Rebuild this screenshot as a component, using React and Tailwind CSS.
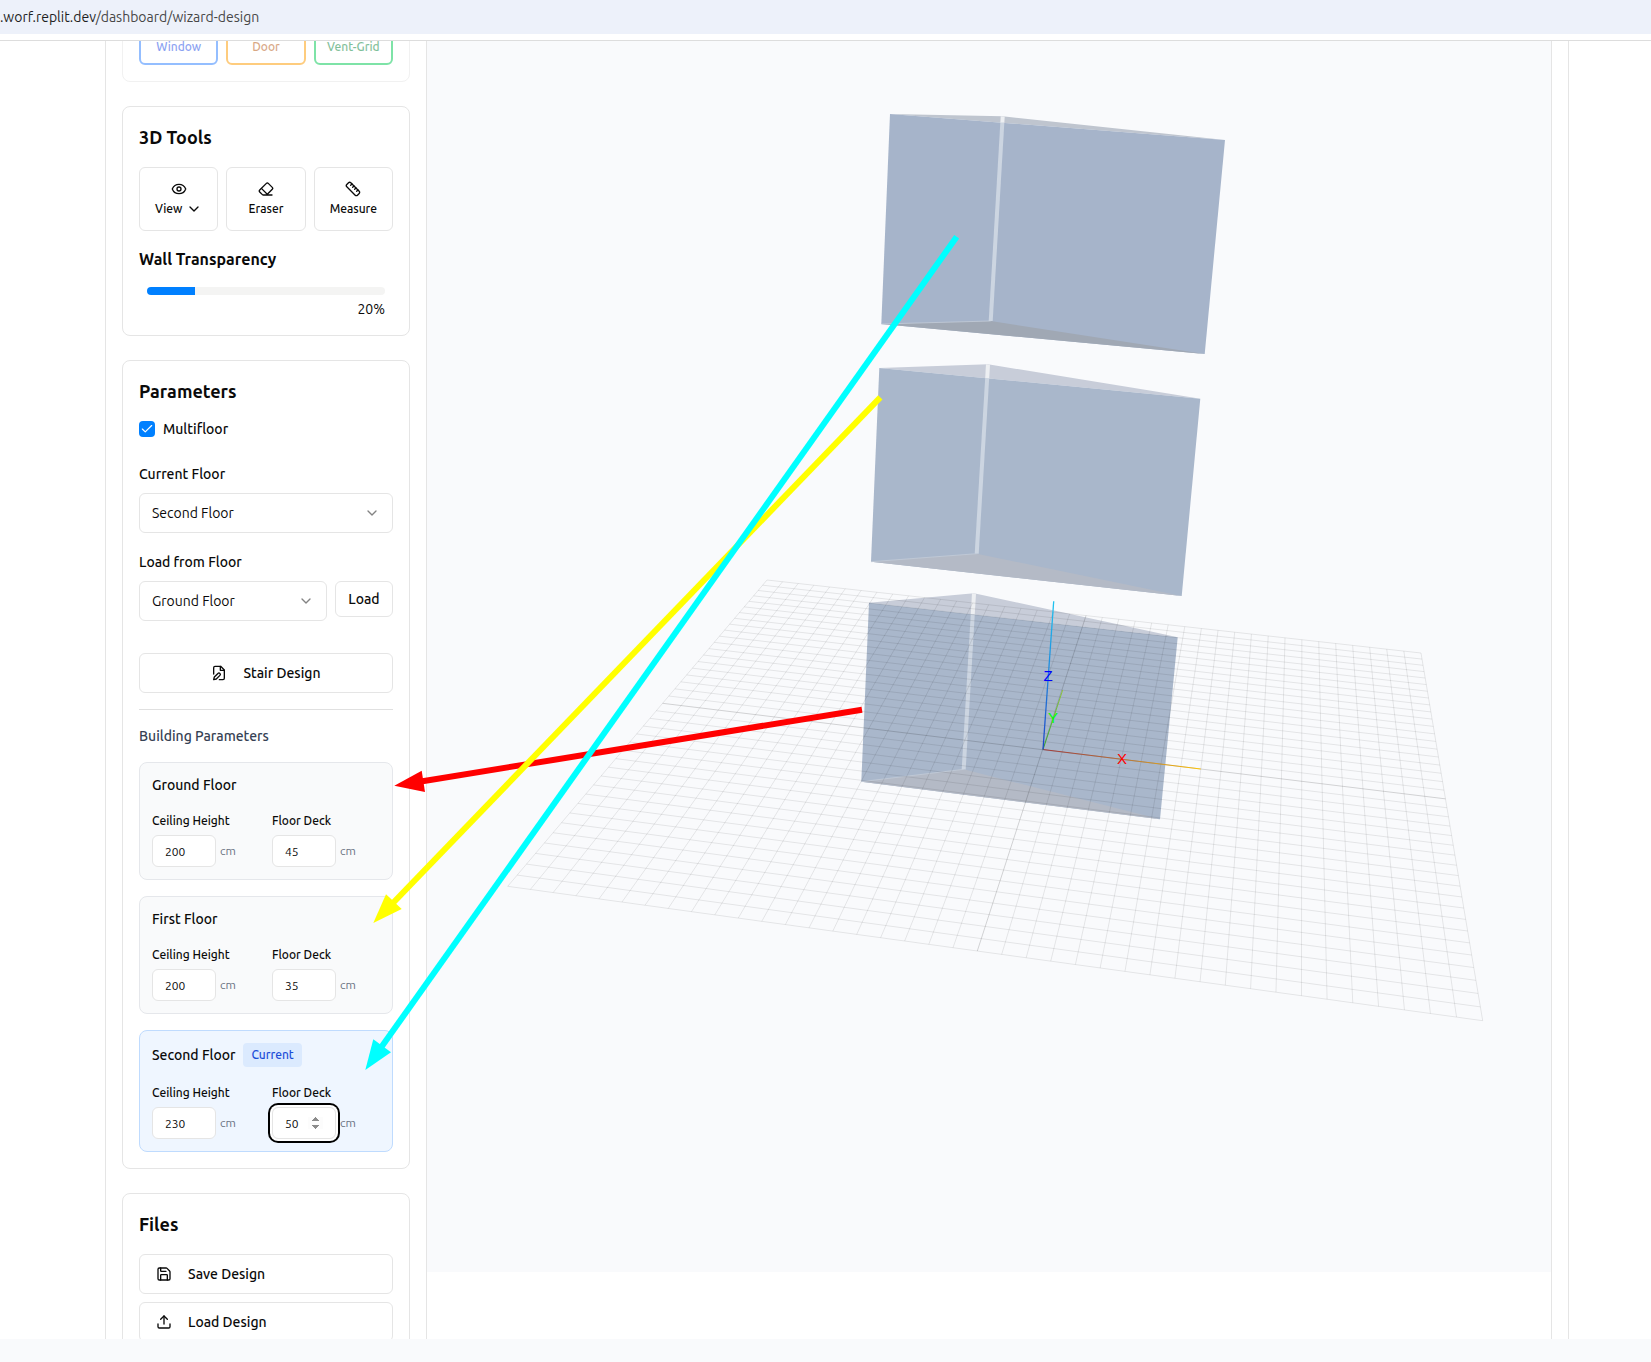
import { ChevronDown, Eraser, Eye, Ruler, Save, Upload, Check } from "lucide-react";

const CARD = "rounded-lg border border-[#e5e5e5] bg-white p-4";
const BUTTON = "rounded-md border border-[#e5e5e5] bg-white font-medium";

/* ---------- sidebar ---------- */

function PlaceCard() {
  return (
    <section className={`${CARD} -mt-[49px] opacity-50`}>
      <div className="grid grid-cols-3 gap-2 text-xs font-medium">
        <button className="flex h-14 items-end justify-center rounded-md border-2 border-blue-500 pb-2 text-blue-700">Window</button>
        <button className="flex h-14 items-end justify-center rounded-md border-2 border-amber-500 pb-2 text-[#b45309]">Door</button>
        <button className="flex h-14 items-end justify-center rounded-md border-2 border-green-500 pb-2 text-green-700">Vent-Grid</button>
      </div>
    </section>
  );
}

function ToolButton({ icon: Icon, children }) {
  return (
    <button className={`${BUTTON} flex h-16 flex-col items-center justify-center gap-1 text-xs`}>
      <Icon size={16} />
      <span className="flex items-center gap-1">{children}</span>
    </button>
  );
}

function ToolsCard() {
  const value = 20;
  return (
    <section className={CARD}>
      <h2 className="text-lg leading-7 font-semibold">3D Tools</h2>
      <div className="mt-4 grid grid-cols-3 gap-2">
        <ToolButton icon={Eye}>
          View <ChevronDown size={16} />
        </ToolButton>
        <ToolButton icon={Eraser}>Eraser</ToolButton>
        <ToolButton icon={Ruler}>Measure</ToolButton>
      </div>
      <label htmlFor="transparency" className="mt-4 block text-base leading-6 font-semibold">
        Wall Transparency
      </label>
      <div className="mt-4 px-2">
        <input
          id="transparency"
          type="range"
          min="0"
          max="100"
          defaultValue={value}
          className="block h-2 w-full appearance-none overflow-hidden rounded-full [&::-webkit-slider-thumb]:size-0 [&::-webkit-slider-thumb]:appearance-none"
          style={{ background: `linear-gradient(to right, #0080ff ${value}%, #f4f4f3 ${value}%)` }}
        />
        <output htmlFor="transparency" className="mt-1 block text-right text-sm">
          {value}%
        </output>
      </div>
    </section>
  );
}

function FloorSelect({ id, value }) {
  return (
    <div className="relative min-w-0 flex-1">
      <select
        id={id}
        defaultValue={value}
        className="block h-10 w-full appearance-none rounded-md border border-[#e5e5e5] bg-white px-3 text-sm"
      >
        <option>Ground Floor</option>
        <option>First Floor</option>
        <option>Second Floor</option>
      </select>
      <ChevronDown size={16} className="pointer-events-none absolute top-3 right-[13px] opacity-50" />
    </div>
  );
}

function FilePenIcon() {
  return (
    <svg width="16" height="16" viewBox="0 0 24 24" fill="none" stroke="currentColor" strokeWidth="2" strokeLinecap="round" strokeLinejoin="round">
      <path d="M4 13.5V4a2 2 0 0 1 2-2h8.5L20 7.5V20a2 2 0 0 1-2 2h-5.5" />
      <path d="M14 2v6h6" />
      <path d="M10.42 12.61a2.1 2.1 0 1 1 2.97 2.97L7.95 21 4 22l.99-3.95 5.43-5.44Z" />
    </svg>
  );
}

function Measure({ id, label, value, focused }) {
  return (
    <div>
      <label htmlFor={id} className="flex h-7 items-center text-xs font-medium">
        {label}
      </label>
      <div className="flex items-center gap-1">
        <input
          id={id}
          type="number"
          defaultValue={value}
          className={`h-8 w-16 rounded-md border border-[#e5e5e5] bg-white px-3 text-xs ${
            focused
              ? "ring-2 ring-black ring-offset-2 [&::-webkit-inner-spin-button]:opacity-100"
              : "[&::-webkit-inner-spin-button]:opacity-0"
          }`}
        />
        <span className="text-xs text-gray-500">cm</span>
      </div>
    </div>
  );
}

function FloorCard({ name, ceiling, deck, current }) {
  const id = name.toLowerCase().replace(" ", "-");
  return (
    <div className={`rounded-lg border p-3 ${current ? "border-[#bfdbfe] bg-[#eff6ff]" : "border-[#e5e7eb] bg-[#f9fafb]"}`}>
      <div className="mb-3 flex items-center gap-2">
        <h4 className="text-sm font-medium">{name}</h4>
        {current && <span className="rounded bg-[#dbeafe] px-2 py-1 text-xs font-medium text-[#1d4ed8]">Current</span>}
      </div>
      <div className="grid grid-cols-2 gap-3">
        <Measure id={`${id}-ceiling`} label="Ceiling Height" value={ceiling} />
        <Measure id={`${id}-deck`} label="Floor Deck" value={deck} focused={current} />
      </div>
    </div>
  );
}

function ParametersCard() {
  return (
    <section className={CARD}>
      <h2 className="text-lg leading-7 font-semibold">Parameters</h2>
      <div className="mt-4 flex h-4 items-center gap-2">
        <span className="relative size-4">
          <input id="multifloor" type="checkbox" defaultChecked className="block size-4 appearance-none rounded bg-[#0080ff]" />
          <Check size={14} strokeWidth={2} className="pointer-events-none absolute top-px left-px text-white" />
        </span>
        <label htmlFor="multifloor" className="text-sm font-medium">Multifloor</label>
      </div>
      <label htmlFor="current-floor" className="mt-6 flex h-6 items-center pt-0.5 text-sm font-medium">Current Floor</label>
      <div className="mt-2 flex">
        <FloorSelect id="current-floor" value="Second Floor" />
      </div>
      <label htmlFor="load-floor" className="mt-4 flex h-6 items-center pt-0.5 text-sm font-medium">Load from Floor</label>
      <div className="mt-2 flex items-start gap-2">
        <FloorSelect id="load-floor" value="Ground Floor" />
        <button className={`${BUTTON} h-9 w-[58px] text-sm`}>Load</button>
      </div>
      <button className={`${BUTTON} mt-8 flex h-10 w-full items-center justify-center gap-4 text-sm`}>
        <FilePenIcon />
        Stair Design
      </button>
      <div className="mt-4 border-t border-[#e0e0e0] pt-4">
        <h3 className="text-sm font-medium text-gray-700">Building Parameters</h3>
        <div className="mt-4 flex flex-col gap-4">
          <FloorCard name="Ground Floor" ceiling={200} deck={45} />
          <FloorCard name="First Floor" ceiling={200} deck={35} />
          <FloorCard name="Second Floor" ceiling={230} deck={50} current />
        </div>
      </div>
    </section>
  );
}

function FilesCard() {
  const row = `${BUTTON} flex h-10 w-full items-center gap-4 px-4 text-sm`;
  return (
    <section className={CARD}>
      <h2 className="text-lg leading-7 font-semibold">Files</h2>
      <div className="mt-4 flex flex-col gap-2">
        <button className={row}><Save size={16} />Save Design</button>
        <button className={row}><Upload size={16} />Load Design</button>
      </div>
    </section>
  );
}

/* ---------- 3D scene ---------- */

const DIVISIONS = 40;
const CORNERS = [[767, 580], [1421, 653], [1482.7, 1020.7], [507.7, 886.3]];

// Projective mapping of the unit square onto the ground-plane corners.
function projector([[x0, y0], [x1, y1], [x2, y2], [x3, y3]]) {
  const dx1 = x1 - x2, dx2 = x3 - x2, sx = x0 - x1 + x2 - x3;
  const dy1 = y1 - y2, dy2 = y3 - y2, sy = y0 - y1 + y2 - y3;
  const det = dx1 * dy2 - dx2 * dy1;
  const g = (sx * dy2 - dx2 * sy) / det;
  const h = (dx1 * sy - sx * dy1) / det;
  const a = x1 - x0 + g * x1, b = x3 - x0 + h * x3;
  const d = y1 - y0 + g * y1, e = y3 - y0 + h * y3;
  return (u, v) => {
    const w = g * u + h * v + 1;
    return `${((a * u + b * v + x0) / w).toFixed(2)} ${((d * u + e * v + y0) / w).toFixed(2)}`;
  };
}

const project = projector(CORNERS);
const line = (i) => {
  const t = i / DIVISIONS;
  return `M${project(t, 0)}L${project(t, 1)}M${project(0, t)}L${project(1, t)}`;
};
const GRID = Array.from({ length: DIVISIONS + 1 }, (_, i) => (i === DIVISIONS / 2 ? "" : line(i))).join("");

const BOXES = [
  { tl: [890, 114], top: [1002.7, 116.3], tr: [1225, 140], br: [1204.7, 354], bl: [881.3, 324], low: [990.7, 321], front: "#a6b4ca", roof: "#bfc5cf", base: "#a0a8b4" },
  { tl: [879.3, 368], top: [988, 364.3], tr: [1200.3, 398.7], br: [1181.7, 596], bl: [871, 561.7], low: [976.7, 553.7], front: "#a9b7cb", roof: "#c8cdd9", base: "#b4bac6" },
  { tl: [869, 602.7], top: [974, 593.3], tr: [1177.7, 637.3], br: [1160, 819.3], bl: [861.3, 781.7], low: [963.7, 769.3], front: "#a9b7cb", roof: "#c8cdd9", base: "#b4bac6" },
];

function Box({ tl, top, tr, br, bl, low, front, roof, base }) {
  const k = (top[0] - tl[0]) / (tr[0] - tl[0]);
  const edgeY = tl[1] + k * (tr[1] - tl[1]);
  const edgeX = top[0] + ((low[0] - top[0]) * (edgeY - top[1])) / (low[1] - top[1]);
  return (
    <g>
      <polygon points={[tl, top, tr].join(" ")} fill={roof} />
      <polygon points={[tl, tr, br, bl].join(" ")} fill={front} />
      <polygon points={[bl, low, br].join(" ")} fill={base} />
      <path d={`M${bl}L${low}`} stroke="#c3cbd8" strokeWidth="0.8" />
      <path d={`M${top}L${edgeX} ${edgeY}`} stroke="#edeff2" strokeWidth="4" />
      <path d={`M${edgeX} ${edgeY}L${low}`} stroke="#ccd5e1" strokeWidth="4" />
    </g>
  );
}

function Scene() {
  return (
    <svg viewBox="427 41 1124 1231" className="block w-full bg-[#f9fafc]" fill="none">
      <defs>
        <linearGradient id="ax" gradientUnits="userSpaceOnUse" x1="1043" y1="749" x2="1201" y2="769">
          <stop stopColor="#a33a3a" /><stop offset="0.5" stopColor="#b5713a" /><stop offset="1" stopColor="#ffc400" />
        </linearGradient>
        <linearGradient id="ay" gradientUnits="userSpaceOnUse" x1="1043" y1="749" x2="1063" y2="690">
          <stop stopColor="#2fa52f" /><stop offset="1" stopColor="#8fc63c" />
        </linearGradient>
        <linearGradient id="az" gradientUnits="userSpaceOnUse" x1="1043" y1="749" x2="1054" y2="601">
          <stop stopColor="#1f45c8" /><stop offset="1" stopColor="#1fc4f0" />
        </linearGradient>
      </defs>
      {BOXES.map((box) => <Box key={box.tl[1]} {...box} />)}
      <path d={GRID} stroke="#000" strokeOpacity="0.085" />
      <path d={line(DIVISIONS / 2)} stroke="#000" strokeOpacity="0.16" />
      <path d="M1043 749.5L1200.7 769" stroke="url(#ax)" />
      <path d="M1043 749.5L1062.7 690" stroke="url(#ay)" />
      <path d="M1043 749.5L1053.7 601.3" stroke="url(#az)" strokeWidth="1.3" />
      <g fontSize="15" textAnchor="middle" className="font-['Liberation_Sans',sans-serif]">
        <text x="1048" y="681" fill="#00f">Z</text>
        <text x="1053" y="723" fill="#0f0">Y</text>
        <text x="1122" y="764" fill="#f00">X</text>
      </g>
    </svg>
  );
}

function Arrows() {
  return (
    <svg viewBox="0 0 1651 1362" className="pointer-events-none absolute top-0 left-0 w-full" strokeWidth="6">
      <path d="M862 709.7L421 781.5" stroke="#f00" />
      <polygon points="394.3,785.7 421.7,770.7 425,792" fill="#f00" stroke="none" />
      <path d="M880.3 397.3L392 904" stroke="#ff0" />
      <polygon points="373.3,923 386,894.3 401.7,909" fill="#ff0" stroke="none" />
      <path d="M956.7 236.7L380 1049" stroke="#0ff" />
      <polygon points="365.3,1070 373.3,1039.3 391,1052.3" fill="#0ff" stroke="none" />
    </svg>
  );
}

export default function App() {
  return (
    <div className="relative flex h-screen flex-col overflow-hidden bg-white font-['Ubuntu','Noto_Sans',sans-serif] text-[#0a0a0a]">
      <header className="shrink-0 border-b border-[#dddddd] pb-1.5">
        <div className="flex h-[34px] items-center bg-[#edf1fa] text-sm">
          <a href="#wizard-design" className="text-[#474747]">
            <span className="text-[#1f1f1f]">.worf.replit.dev</span>/dashboard/wizard-design
          </a>
        </div>
      </header>
      <main className="mr-[82px] ml-[105px] flex min-h-0 flex-1 overflow-hidden border-x border-[#e5e5e5]">
        <aside className="flex h-max w-[321px] shrink-0 flex-col gap-6 border-r border-[#e5e5e5] px-4">
          <PlaceCard />
          <ToolsCard />
          <ParametersCard />
          <FilesCard />
        </aside>
        <div className="mr-4 min-w-0 flex-1 border-r border-[#e5e5e5]">
          <Scene />
        </div>
      </main>
      <footer className="h-[23px] shrink-0 bg-[#f9fafc]" />
      <Arrows />
    </div>
  );
}
